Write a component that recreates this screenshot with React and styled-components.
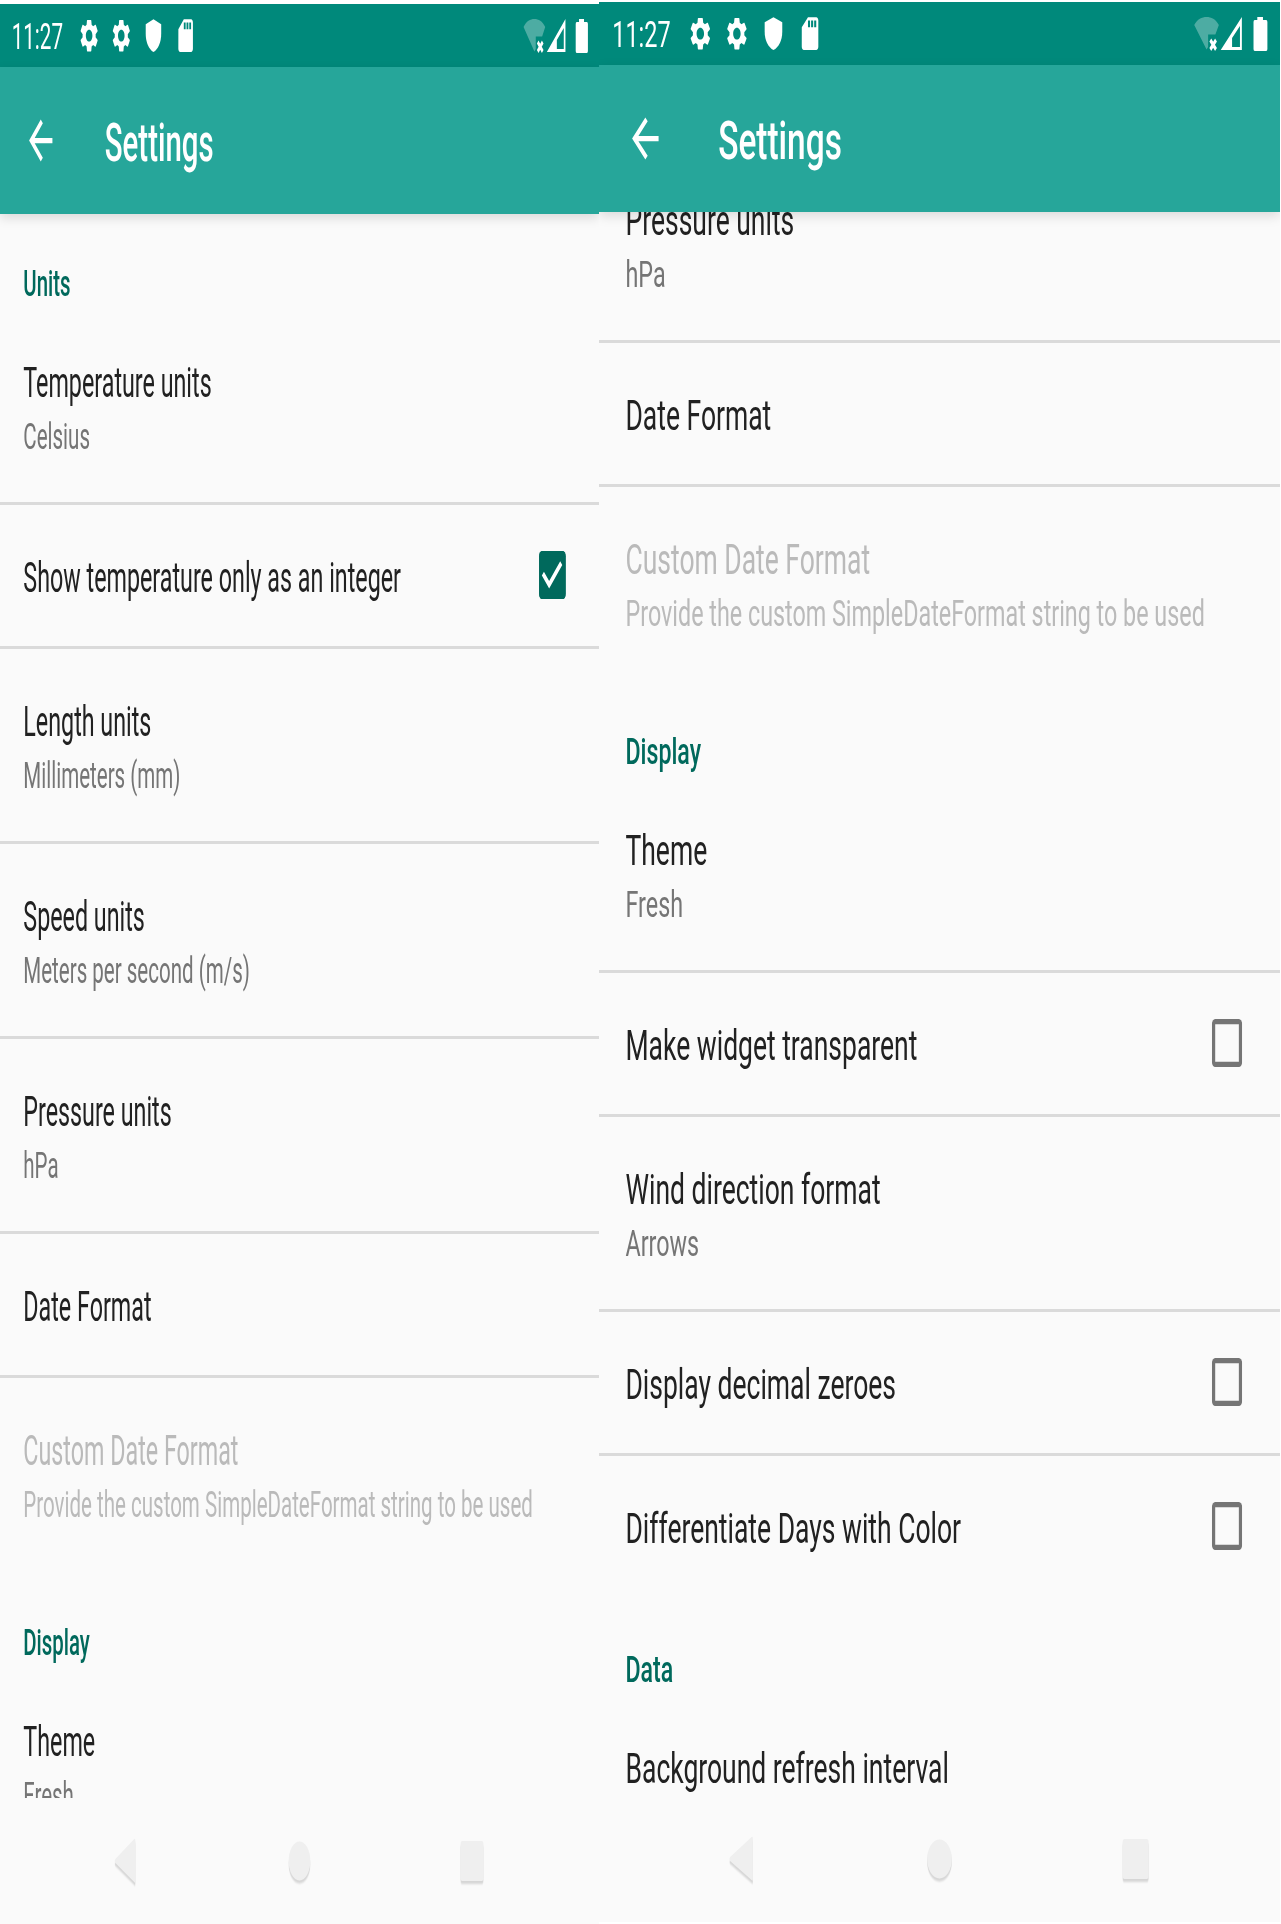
import React from "react";
import styled, { createGlobalStyle } from "styled-components";

const GlobalStyle = createGlobalStyle`
  * { box-sizing: border-box; }
  body { margin: 0; background: #fff; font-family: Roboto, "Liberation Sans", sans-serif; }
`;

const Page = styled.main`
  display: flex;
  align-items: flex-start;
  width: 1281px;
  height: 1924px;
  overflow: hidden;
`;

const Pane = styled.section`
  flex: none;
  width: ${(p) => p.$width}px;
  height: 1924px;
  padding-top: ${(p) => p.$top}px;
  overflow: hidden;
`;

/* A 1080x1920 device screen squeezed horizontally into its pane. */
const Screen = styled.div`
  display: flex;
  flex-direction: column;
  width: 1080px;
  height: 1920px;
  background: #fafafa;
  transform: scaleX(${(p) => p.$scale});
  transform-origin: 0 0;
`;

const StatusBar = styled.header`
  flex: none;
  display: flex;
  align-items: center;
  height: 63px;
  padding: 0 20px 0 21px;
  background: #00897b;
  color: #fff;
`;

const Clock = styled.span`
  width: 110px;
  font-size: 37.2px;
  line-height: 63px;
  padding-top: 2px;
`;

const Notifications = styled.div`
  display: flex;
  gap: 18.6px;
  margin-left: 10px;
  flex: 1;
`;

const SystemIcons = styled.div`
  display: flex;
  align-items: center;
`;

const Glyph = styled.svg`
  display: block;
  flex: none;
  width: ${(p) => p.$w}px;
  height: ${(p) => p.$h || p.$w}px;
  fill: currentColor;
  overflow: visible;
`;

const Toolbar = styled.div`
  flex: none;
  display: flex;
  align-items: center;
  gap: 84px;
  height: 147px;
  padding: 0 42px;
  background: #26a69a;
  color: #fff;
  box-shadow: 0 4px 14px rgba(0, 0, 0, 0.13);
  z-index: 1;
`;

const ToolbarTitle = styled.h1`
  margin: 0;
  padding-top: 4px;
  font-size: 53px;
  font-weight: 500;
  line-height: 70px;
`;

const Viewport = styled.div`
  flex: 1;
  min-height: 0;
  overflow: hidden;
`;

const List = styled.div`
  display: flex;
  flex-direction: column;
  margin-top: ${(p) => -p.$scroll}px;
`;

const Category = styled.h2`
  flex: none;
  height: 96px;
  margin: ${(p) => (p.$first ? 0 : 3)}px 0 0;
  padding: 44px 42px 0;
  color: #00695c;
  font-size: 36.75px;
  font-weight: 500;
  line-height: 51px;
`;

const Row = styled.div`
  flex: none;
  display: flex;
  align-items: center;
  justify-content: space-between;
  height: ${(p) => (p.$double ? 192 : 141) + (p.$last ? 0 : 3)}px;
  padding: 0 60px 0 42px;
  border-bottom: ${(p) => (p.$last ? 0 : 3)}px solid #dadada;
`;

const RowText = styled.div`
  padding-top: 4px;
`;

const Label = styled.div`
  color: ${(p) => (p.$disabled ? "#bababa" : "#212121")};
  font-size: 42px;
  line-height: 57px;
  white-space: nowrap;
`;

const Summary = styled.div`
  color: ${(p) => (p.$disabled ? "#bababa" : "#757575")};
  font-size: 37px;
  line-height: 51px;
  white-space: nowrap;
`;

const CheckBox = styled.span`
  display: flex;
  width: 48px;
  height: 47.25px;
  margin-bottom: 1px;
  padding: 5.25px;
  box-shadow: inset 0 0 0 5.25px ${(p) => (p.$checked ? "#00695c" : "#757575")};
  border-radius: 5.25px;
  background: ${(p) => (p.$checked ? "#00695c" : "transparent")};
  color: #fff;
`;

const NavBar = styled.nav`
  flex: none;
  display: flex;
  justify-content: space-between;
  align-items: center;
  height: 126px;
  padding: 0 198px;
  color: #efefef;
  svg { filter: drop-shadow(0 3px 1px rgba(0, 0, 0, 0.14)); }
`;

const GEAR =
  "M19.14 12.94c.04-.3.06-.61.06-.94 0-.32-.02-.64-.07-.94l2.03-1.58c.18-.14.23-.41.12-.61l-1.92-3.32c-.12-.22-.37-.29-.59-.22l-2.39.96c-.5-.38-1.03-.7-1.62-.94l-.36-2.54c-.04-.24-.24-.41-.48-.41h-3.84c-.24 0-.43.17-.47.41l-.36 2.54c-.59.24-1.13.57-1.62.94l-2.39-.96c-.22-.08-.47 0-.59.22L2.74 8.87c-.12.21-.08.47.12.61l2.03 1.58c-.05.3-.09.63-.09.94s.02.64.07.94l-2.03 1.58c-.18.14-.23.41-.12.61l1.92 3.32c.12.22.37.29.59.22l2.39-.96c.5.38 1.03.7 1.62.94l.36 2.54c.05.24.24.41.48.41h3.84c.24 0 .44-.17.47-.41l.36-2.54c.59-.24 1.13-.56 1.62-.94l2.39.96c.22.08.47 0 .59-.22l1.92-3.32c.12-.22.07-.47-.12-.61l-2.01-1.58zM12 15.6c-1.98 0-3.6-1.62-3.6-3.6s1.62-3.6 3.6-3.6 3.6 1.62 3.6 3.6-1.62 3.6-3.6 3.6z";
const SHIELD =
  "M12 2L3.500 5v6c0 5.200 3.600 9.400 8.500 11 4.900-1.600 8.500-5.800 8.500-11V5L12 2z";
const SD_CARD =
  "M18 2h-8L4.02 8 4 20c0 1.1.9 2 2 2h12c1.1 0 2-.9 2-2V4c0-1.1-.9-2-2-2zm-6 6h-2V4h2v4zm3 0h-2V4h2v4zm3 0h-2V4h2v4z";
const BACK_ARROW =
  "M20 11H7.83l5.59-5.59L12 4l-8 8 8 8 1.41-1.41L7.83 13H20v-2z";

const NOTIFICATIONS = [GEAR, GEAR, SHIELD, SD_CARD];

function StatusIcons() {
  return (
    <SystemIcons>
      <Glyph $w={76} $h={36} viewBox="0 0 76 36">
        <path opacity="0.3" d="M0 9C5 3 12 1 19.500 1S34 3 39 9L33.500 18.500H22V31L19.500 33.500Z" />
        <path d="M25.500 24L34.500 33.500M34.500 24L25.500 33.500" fill="none" stroke="#fff" strokeWidth="4" />
        <path fillRule="evenodd" d="M42 34L75.500 1V34ZM60 31H72.500V10L60 22Z" />
      </Glyph>
      <Glyph $w={40} $h={36} viewBox="0 0 40 36">
        <path d="M24 1H33V4H38Q40 4 40 6V33Q40 35 38 35H20Q18 35 18 33V6Q18 4 20 4H24Z" />
      </Glyph>
    </SystemIcons>
  );
}

function Item({ title, summary, checked, disabled, last }) {
  return (
    <Row $double={Boolean(summary)} $last={last}>
      <RowText>
        <Label $disabled={disabled}>{title}</Label>
        {summary && <Summary $disabled={disabled}>{summary}</Summary>}
      </RowText>
      {checked !== undefined && (
        <CheckBox $checked={checked}>
          {checked && (
            <Glyph $w={36.75} viewBox="0 0 14 14">
              <path d="M5 12L0 7l1.410-1.410L5 9.170l7.590-7.590L14 3z" />
            </Glyph>
          )}
        </CheckBox>
      )}
    </Row>
  );
}

function Phone({ width, top, scroll = 0, items }) {
  return (
    <Pane $width={width} $top={top}>
      <Screen $scale={width / 1080}>
        <StatusBar>
          <Clock>11:27</Clock>
          <Notifications>
            {NOTIFICATIONS.map((d, i) => (
              <Glyph key={i} $w={39.4} viewBox="0 0 24 24">
                <path d={d} />
              </Glyph>
            ))}
          </Notifications>
          <StatusIcons />
        </StatusBar>
        <Toolbar>
          <Glyph $w={63} viewBox="0 0 24 24">
            <path d={BACK_ARROW} />
          </Glyph>
          <ToolbarTitle>Settings</ToolbarTitle>
        </Toolbar>
        <Viewport>
          <List $scroll={scroll}>
            {items.map((item, i) =>
              item.category ? (
                <Category key={i} $first={i === 0}>{item.category}</Category>
              ) : (
                <Item key={i} {...item} />
              )
            )}
          </List>
        </Viewport>
        <NavBar>
          <Glyph $w={56} viewBox="0 0 56 56">
            <path d="M44 6Q46 5 46 8V48Q46 51 44 49L10 30Q8 28 10 26Z" />
          </Glyph>
          <Glyph $w={56} viewBox="0 0 56 56">
            <circle cx="28" cy="28" r="19.500" />
          </Glyph>
          <Glyph $w={56} viewBox="0 0 56 56">
            <rect x="4.500" y="8" width="41" height="40" rx="3" />
          </Glyph>
        </NavBar>
      </Screen>
    </Pane>
  );
}

const PRESSURE = { title: "Pressure units", summary: "hPa" };
const DATE = { title: "Date Format" };
const CUSTOM_DATE = {
  title: "Custom Date Format",
  summary: "Provide the custom SimpleDateFormat string to be used",
  disabled: true,
  last: true,
};
const THEME = { title: "Theme", summary: "Fresh" };

const TOP_ITEMS = [
  { category: "Units" },
  { title: "Temperature units", summary: "Celsius" },
  { title: "Show temperature only as an integer", checked: true },
  { title: "Length units", summary: "Millimeters (mm)" },
  { title: "Speed units", summary: "Meters per second (m/s)" },
  PRESSURE,
  DATE,
  CUSTOM_DATE,
  { category: "Display" },
  THEME,
];

const SCROLLED_ITEMS = [
  PRESSURE,
  DATE,
  CUSTOM_DATE,
  { category: "Display" },
  THEME,
  { title: "Make widget transparent", checked: false },
  { title: "Wind direction format", summary: "Arrows" },
  { title: "Display decimal zeroes", checked: false },
  { title: "Differentiate Days with Color", checked: false, last: true },
  { category: "Data" },
  { title: "Background refresh interval" },
];

export default function App() {
  return (
    <>
      <GlobalStyle />
      <Page>
        <Phone width={599} top={4} items={TOP_ITEMS} />
        <Phone width={681} top={2} scroll={64} items={SCROLLED_ITEMS} />
      </Page>
    </>
  );
}
